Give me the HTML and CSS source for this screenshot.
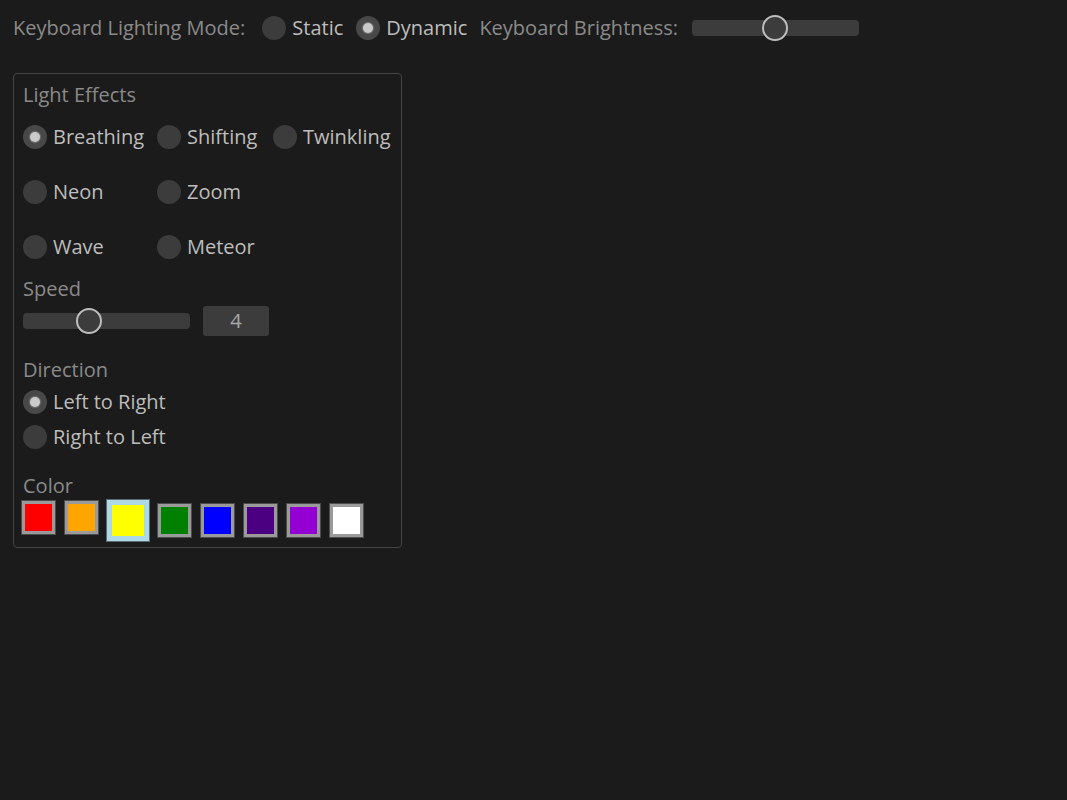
FILE: index.html
```html
<!DOCTYPE html>
<html lang="en">
<head>
<meta charset="utf-8">
<title>Keyboard Lighting</title>
<link rel="stylesheet" href="styles.css">
</head>
<body>
<div class="topbar">
  <span class="label lbl-mode">Keyboard Lighting Mode:</span>
  <label class="radio r-static"><span class="dot"></span><span class="txt">Static</span></label>
  <label class="radio checked r-dynamic"><span class="dot"></span><span class="txt">Dynamic</span></label>
  <span class="label lbl-bright">Keyboard Brightness:</span>
  <div class="slider bright"><span class="thumb"></span></div>
</div>

<div class="frame">
  <div class="label title">Light Effects</div>
  <div class="effects">
    <label class="radio checked"><span class="dot"></span><span class="txt">Breathing</span></label>
    <label class="radio"><span class="dot"></span><span class="txt">Shifting</span></label>
    <label class="radio"><span class="dot"></span><span class="txt">Twinkling</span></label>
    <label class="radio"><span class="dot"></span><span class="txt">Neon</span></label>
    <label class="radio"><span class="dot"></span><span class="txt">Zoom</span></label>
    <span></span>
    <label class="radio"><span class="dot"></span><span class="txt">Wave</span></label>
    <label class="radio"><span class="dot"></span><span class="txt">Meteor</span></label>
    <span></span>
  </div>

  <div class="label speed-lbl">Speed</div>
  <div class="speed-row">
    <div class="slider speed"><span class="thumb"></span></div>
    <div class="spin">4</div>
  </div>

  <div class="label dir-lbl">Direction</div>
  <label class="radio checked ltr"><span class="dot"></span><span class="txt">Left to Right</span></label>
  <label class="radio rtl"><span class="dot"></span><span class="txt">Right to Left</span></label>

  <div class="label color-lbl">Color</div>
  <div class="swatches">
    <span class="sw raised" style="background:#ff0000"></span>
    <span class="sw raised" style="background:#ffa500"></span>
    <span class="sw selected" style="background:#ffff00"></span>
    <span class="sw" style="background:#008000"></span>
    <span class="sw" style="background:#0000ff"></span>
    <span class="sw" style="background:#4b0082"></span>
    <span class="sw" style="background:#9400d3"></span>
    <span class="sw" style="background:#ffffff"></span>
  </div>
</div>
</body>
</html>
```

FILE: styles.css
```css
* { box-sizing: border-box; }

html, body {
  margin: 0;
  padding: 0;
  background: #1b1b1b;
}

body {
  font-family: "Open Sans", "Noto Sans", sans-serif;
  font-size: 20px;
  line-height: 24px;
  color: #bdbdbd;
}

.label {
  color: #8a8a8a;
  white-space: nowrap;
}

.topbar {
  display: flex;
  align-items: center;
  height: 56px;
  padding: 0 13px;
}

.lbl-mode { margin-right: 17px; }
.r-static { margin-right: 13px; }
.r-dynamic { margin-right: 12px; }
.lbl-bright { margin-right: 14px; }

.radio {
  display: flex;
  align-items: center;
  gap: 6px;
  white-space: nowrap;
  height: 24px;
}

.radio .dot {
  flex: none;
  width: 24px;
  height: 24px;
  border-radius: 50%;
  background: #3c3c3c;
  display: flex;
  align-items: center;
  justify-content: center;
}

.radio.checked .dot {
  background: #484848;
}

.radio.checked .dot::after {
  content: "";
  width: 10px;
  height: 10px;
  border-radius: 50%;
  background: #cacaca;
  box-shadow: 0 0 1px 1px rgba(200, 200, 200, 0.35);
}

.txt { color: #bdbdbd; }

.slider {
  position: relative;
  height: 16px;
  background: #3c3c3c;
  border-radius: 4px;
  flex: none;
}

.slider .thumb {
  position: absolute;
  top: -5px;
  width: 26px;
  height: 26px;
  border-radius: 50%;
  border: 2px solid #bdbdbd;
  background: #3c3c3c;
}

.bright { width: 167px; }
.bright .thumb { left: 70px; }

.speed { width: 167px; }
.speed .thumb { left: 53px; }

.frame {
  margin: 17px 0 0 13px;
  width: 389px;
  border: 1px solid #444444;
  border-radius: 4px;
  padding: 9px 9px 6px 9px;
  display: flex;
  flex-direction: column;
  align-items: flex-start;
}

.effects {
  margin-top: 18px;
  display: grid;
  grid-template-columns: 134px 116px auto;
  row-gap: 31px;
}

.speed-lbl { margin-top: 18px; }

.speed-row {
  margin-top: 5px;
  display: flex;
  align-items: center;
  gap: 13px;
}

.spin {
  width: 66px;
  height: 30px;
  border-radius: 3px;
  background: #3c3c3c;
  color: #a8a8a8;
  text-align: center;
  line-height: 30px;
}

.dir-lbl { margin-top: 22px; }
.ltr { margin-top: 8px; }
.rtl { margin-top: 11px; }

.color-lbl { margin-top: 25px; }

.swatches {
  margin-top: 2px;
  margin-left: -1px;
  height: 41px;
  display: flex;
  align-items: center;
  gap: 10px;
}

.sw {
  flex: none;
  width: 33px;
  height: 33px;
  border: 3px solid #9a9a9a;
  box-shadow: 0 0 0 1px #4c4c4c;
}

.sw.raised {
  align-self: flex-start;
  margin-top: 1px;
}

.sw.selected {
  width: 42px;
  height: 41px;
  border: 5px solid #add8e6;
  margin: 0 -1px 0 -1px;
  box-shadow: 0 0 0 1px #5a6a70;
}
```
